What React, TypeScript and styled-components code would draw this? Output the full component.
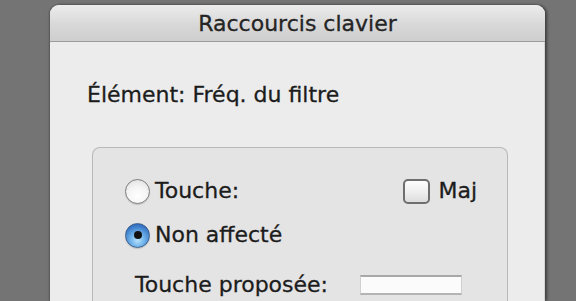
import React from "react";
import styled, { createGlobalStyle } from "styled-components";

const GlobalStyle = createGlobalStyle`
  html, body {
    margin: 0;
    padding: 0;
    background: #747474;
    overflow: hidden;
  }
  body {
    font-family: "DejaVu Sans", "Liberation Sans", sans-serif;
    color: #1c1c1c;
    -webkit-text-stroke: 0.3px #1c1c1c;
  }
`;

const Page = styled.div`
  width: 576px;
  height: 301px;
  padding: 5px 0 0 50px;
  box-sizing: border-box;
`;

const Window = styled.div`
  width: 495px;
  height: 296px;
  background: #ececec;
  border-radius: 9px 9px 0 0;
  box-shadow: 2px 0 3px rgba(0, 0, 0, 0.45), -1px 0 2px rgba(0, 0, 0, 0.25);
  overflow: hidden;
  display: flex;
  flex-direction: column;
`;

const TitleBar = styled.div`
  height: 37px;
  flex-shrink: 0;
  background: linear-gradient(#ececec, #d8d8d8 55%, #cecece);
  border-bottom: 1px solid #9c9c9c;
  display: flex;
  align-items: center;
  justify-content: center;
  font-size: 22px;
  color: #262626;
  padding-top: 1px;
  box-sizing: border-box;
`;

const Body = styled.div`
  flex: 1;
  padding: 40px 37px 0 37px;
  display: flex;
  flex-direction: column;
  box-shadow: inset -15px 0 0 -14px #d4d4d4;
`;

const ElementLabel = styled.div`
  font-size: 22px;
  line-height: 26px;
  margin-bottom: 39px;
`;

const GroupBox = styled.div`
  margin-left: 5px;
  flex: 1;
  background: #e4e4e4;
  border: 1px solid #b9b9b9;
  border-bottom: none;
  border-radius: 8px 8px 0 0;
  padding: 30px 30px 0 32px;
  display: flex;
  flex-direction: column;
`;

const Row = styled.div<{ $gap?: number }>`
  display: flex;
  align-items: center;
  height: 26px;
  margin-bottom: ${(p) => p.$gap ?? 0}px;
`;

const Option = styled.label`
  display: flex;
  align-items: center;
  gap: 5px;
  font-size: 22px;
  line-height: 26px;
`;

const Radio = styled.span<{ $checked?: boolean }>`
  width: 25px;
  height: 25px;
  border-radius: 50%;
  box-sizing: border-box;
  display: flex;
  align-items: center;
  justify-content: center;
  border: 1px solid ${(p) => (p.$checked ? "#3d5f8c" : "#7d7d7d")};
  background: ${(p) =>
    p.$checked
      ? "radial-gradient(circle at 50% 70%, #b9e2fb 0%, #6fb3ea 35%, #3573c4 75%, #2a5a9c 100%)"
      : "radial-gradient(circle at 50% 70%, #ffffff 0%, #f4f4f4 50%, #d9d9d9 100%)"};
  box-shadow: 0 1px 1px rgba(0, 0, 0, 0.15);
  -webkit-text-stroke: 0;

  &::after {
    content: "";
    display: ${(p) => (p.$checked ? "block" : "none")};
    width: 8px;
    height: 8px;
    border-radius: 50%;
    background: #111;
  }
`;

const Checkbox = styled.span`
  width: 27px;
  height: 25px;
  margin-right: 3px;
  border-radius: 5px;
  box-sizing: border-box;
  border: 2px solid #6e6e6e;
  background: linear-gradient(#fdfdfd, #eeeeee 55%, #dddddd);
`;

const Spacer = styled.div`
  flex: 1;
`;

const ProposedRow = styled.div`
  display: flex;
  align-items: center;
  height: 26px;
  padding-left: 10px;
  margin-top: 24px;
  font-size: 22px;
  line-height: 26px;
`;

const Field = styled.div`
  margin-left: auto;
  margin-right: 15px;
  width: 102px;
  height: 20px;
  box-sizing: border-box;
  background: #fbfbfb;
  border-top: 2px solid #a8a8a8;
  border-bottom: 2px solid #b4b4b4;
  border-left: 1px solid #d0d0d0;
  border-right: 1px solid #d0d0d0;
`;

export default function App() {
  return (
    <>
      <GlobalStyle />
      <Page>
        <Window>
          <TitleBar>Raccourcis clavier</TitleBar>
          <Body>
            <ElementLabel>Élément: Fréq. du filtre</ElementLabel>
            <GroupBox>
              <Row $gap={18}>
                <Option>
                  <Radio />
                  Touche:
                </Option>
                <Spacer />
                <Option>
                  <Checkbox />
                  Maj
                </Option>
              </Row>
              <Row>
                <Option>
                  <Radio $checked />
                  Non affecté
                </Option>
              </Row>
              <ProposedRow>
                Touche proposée:
                <Field />
              </ProposedRow>
            </GroupBox>
          </Body>
        </Window>
      </Page>
    </>
  );
}
